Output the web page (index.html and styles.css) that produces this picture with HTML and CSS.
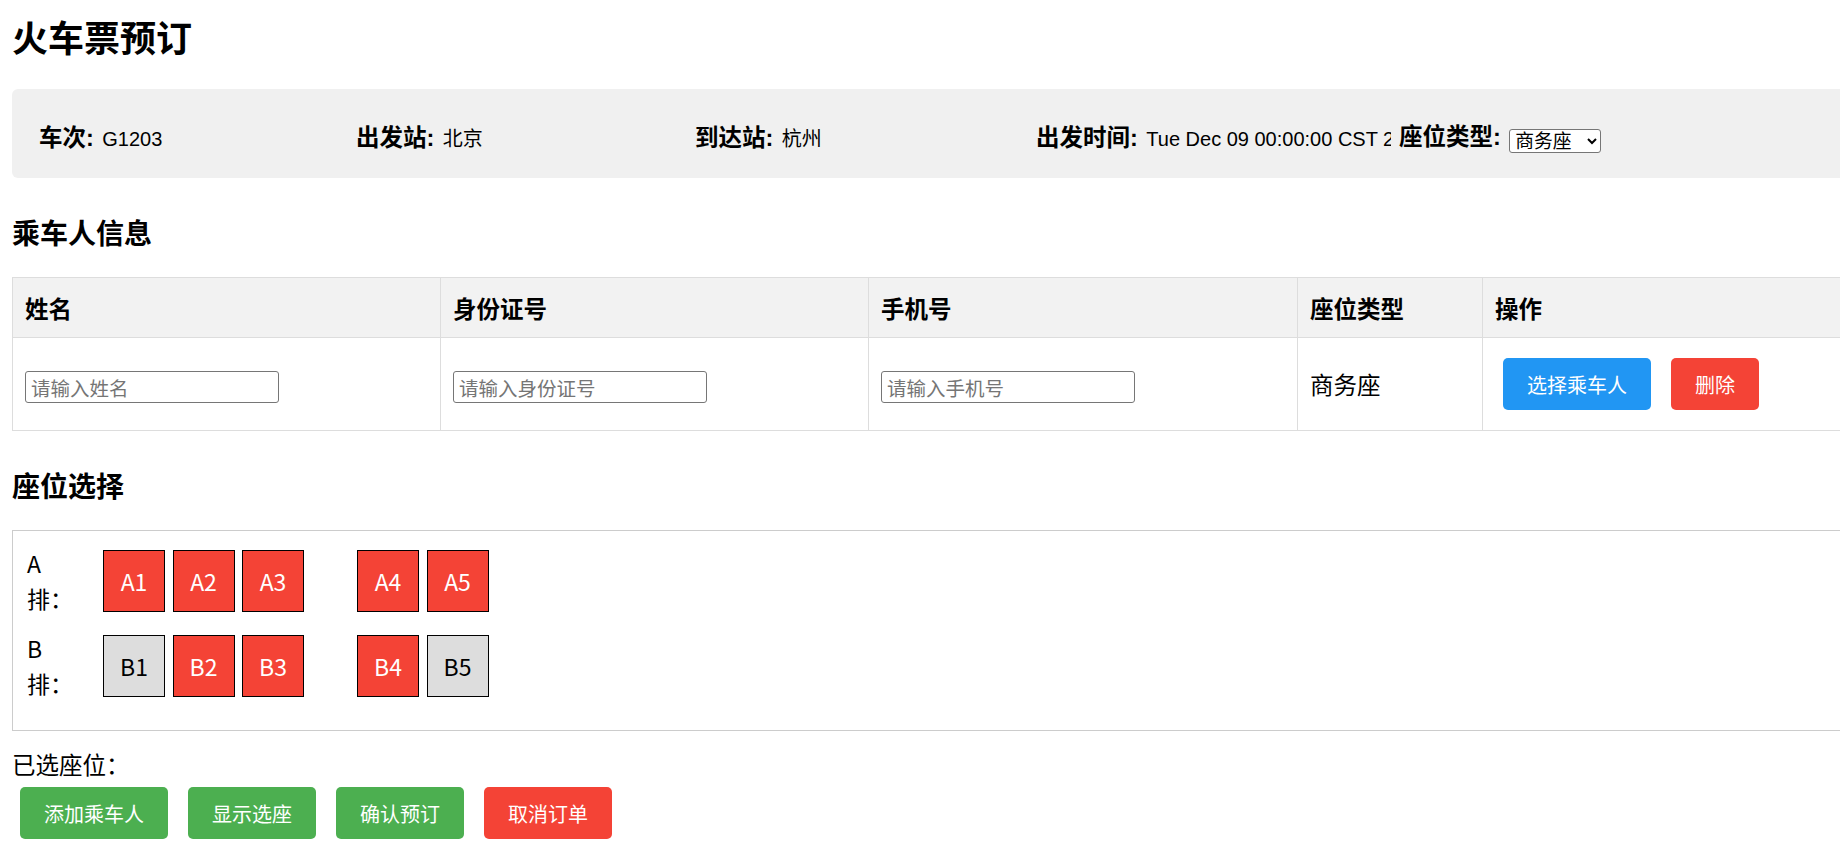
FILE: index.html
```html
<!DOCTYPE html>
<html lang="zh-CN">
<head>
<meta charset="utf-8">
<title>火车票预订</title>
<link rel="stylesheet" href="styles.css">
</head>
<body>
<div class="page">
  <h1 class="title">火车票预订</h1>

  <div class="train-info">
    <div class="info-item"><span class="info-label">车次:</span> <span class="info-value">G1203</span></div>
    <div class="info-item"><span class="info-label">出发站:</span> <span class="info-value">北京</span></div>
    <div class="info-item"><span class="info-label">到达站:</span> <span class="info-value">杭州</span></div>
    <div class="info-item info-clip"><span class="info-label">出发时间:</span> <span class="info-value">Tue Dec 09 00:00:00 CST 2025</span></div>
    <div class="info-item"><span class="info-label">座位类型:</span> <select class="seat-select"><option>商务座</option><option>一等座</option><option>二等座</option></select></div>
  </div>

  <h2 class="section-title section-title-passenger">乘车人信息</h2>
  <table class="passenger-table">
    <colgroup>
      <col class="col-name">
      <col class="col-id">
      <col class="col-phone">
      <col class="col-type">
      <col class="col-op">
    </colgroup>
    <thead>
      <tr><th>姓名</th><th>身份证号</th><th>手机号</th><th>座位类型</th><th>操作</th></tr>
    </thead>
    <tbody>
      <tr>
        <td><input class="text-input" type="text" placeholder="请输入姓名"></td>
        <td><input class="text-input" type="text" placeholder="请输入身份证号"></td>
        <td><input class="text-input" type="text" placeholder="请输入手机号"></td>
        <td>商务座</td>
        <td>
          <div class="row-actions">
            <button class="btn btn-blue">选择乘车人</button>
            <button class="btn btn-red">删除</button>
          </div>
        </td>
      </tr>
    </tbody>
  </table>

  <h2 class="section-title section-title-seats">座位选择</h2>
  <div class="seat-map">
    <div class="seat-row">
      <div class="row-label">A 排：</div>
      <div class="seats">
        <div class="seat seat-taken">A1</div>
        <div class="seat seat-taken">A2</div>
        <div class="seat seat-taken">A3</div>
        <div class="aisle"></div>
        <div class="seat seat-taken">A4</div>
        <div class="seat seat-taken">A5</div>
      </div>
    </div>
    <div class="seat-row">
      <div class="row-label">B 排：</div>
      <div class="seats">
        <div class="seat seat-free">B1</div>
        <div class="seat seat-taken">B2</div>
        <div class="seat seat-taken">B3</div>
        <div class="aisle"></div>
        <div class="seat seat-taken">B4</div>
        <div class="seat seat-free">B5</div>
      </div>
    </div>
  </div>

  <div class="selected">已选座位：</div>
  <div class="bottom-actions">
    <button class="btn btn-green">添加乘车人</button>
    <button class="btn btn-green">显示选座</button>
    <button class="btn btn-green">确认预订</button>
    <button class="btn btn-red">取消订单</button>
  </div>
</div>
</body>
</html>
```

FILE: styles.css
```css
html, body {
  margin: 0;
  padding: 0;
  overflow: hidden;
  background: #fff;
}

body {
  font-family: "Noto Sans CJK SC", "Noto Sans", sans-serif;
  color: #000;
}

.page {
  width: 2000px;
  padding-left: 12px;
}

.title {
  margin: 14px 0 0;
  font-size: 36px;
  line-height: 45px;
  font-weight: bold;
}

/* train info bar */
.train-info {
  margin-top: 30px;
  height: 89px;
  box-sizing: border-box;
  padding: 4px 27px 0;
  background: #f0f0f0;
  border-radius: 6px;
  display: grid;
  grid-template-columns: 309px 331px 333px 355px auto;
  column-gap: 8px;
  align-items: center;
  font-family: "Liberation Sans", "Noto Sans CJK SC", sans-serif;
}

.info-item {
  white-space: nowrap;
}

.info-clip {
  overflow: hidden;
}

.info-label {
  font-size: 23.5px;
  font-weight: bold;
}

.info-value {
  margin-left: 4px;
  font-size: 20px;
}

.seat-select {
  width: 92px;
  height: 24px;
  margin-left: 4px;
  font-family: "Liberation Sans", "Noto Sans CJK SC", sans-serif;
  font-size: 18.8px;
  line-height: 22px;
  vertical-align: -3px;
  border: 1px solid #767676;
  border-radius: 3px;
  background: #fff;
  color: #000;
  padding: 0 0 0 1px;
}

/* section headings */
.section-title {
  margin: 0;
  font-size: 28px;
  line-height: 34px;
  font-weight: bold;
}

.section-title-passenger {
  margin-top: 37px;
}

.section-title-seats {
  margin-top: 37px;
}

/* passenger table */
.passenger-table {
  margin-top: 28px;
  width: 1990px;
  border-collapse: collapse;
  table-layout: fixed;
}

.col-name { width: 428px; }
.col-id { width: 428px; }
.col-phone { width: 429px; }
.col-type { width: 185px; }

.passenger-table th,
.passenger-table td {
  border: 1px solid #ddd;
  padding: 0 12px;
  text-align: left;
  font-size: 23.5px;
  vertical-align: middle;
}

.passenger-table th {
  background: #f2f2f2;
  height: 59px;
  line-height: 28px;
  font-weight: bold;
}

.passenger-table td {
  height: 92px;
}

.text-input {
  display: block;
  width: 254px;
  height: 32px;
  margin-top: 6px;
  box-sizing: border-box;
  border: 1px solid #767676;
  border-radius: 3px;
  padding: 0 5px;
  font-family: "Noto Sans CJK SC", sans-serif;
  font-size: 19.5px;
  background: #fff;
}

.text-input::placeholder {
  color: #757575;
}

.row-actions {
  display: flex;
  gap: 20px;
  padding-left: 8px;
}

/* buttons */
.btn {
  height: 52px;
  padding: 0 24px;
  border: none;
  border-radius: 5px;
  color: #fff;
  font-family: "Noto Sans CJK SC", sans-serif;
  font-size: 20px;
  cursor: pointer;
}

.btn-blue { background: #2196f3; }
.btn-red { background: #f44336; }
.btn-green { background: #4caf50; }

/* seat map */
.seat-map {
  margin-top: 28px;
  border: 1px solid #ccc;
  padding: 19px 14px 33px;
}

.seat-row {
  display: flex;
  align-items: center;
  height: 62px;
}

.seat-row + .seat-row {
  margin-top: 23px;
}

.row-label {
  width: 36px;
  margin-right: 40px;
  font-size: 23px;
  line-height: 35px;
}

.seats {
  display: flex;
  gap: 7.5px;
}

.seat {
  width: 62px;
  height: 62px;
  box-sizing: border-box;
  border: 1px solid #000;
  display: flex;
  align-items: center;
  justify-content: center;
  font-size: 23px;
}

.seat-taken {
  background: #f44336;
  color: #fff;
}

.seat-free {
  background: #ddd;
  color: #000;
}

.aisle {
  width: 38px;
}

/* bottom */
.selected {
  margin-top: 16px;
  font-size: 23.5px;
  line-height: 34px;
}

.bottom-actions {
  margin-top: 6px;
  display: flex;
  gap: 20px;
  padding-left: 8px;
}
```
